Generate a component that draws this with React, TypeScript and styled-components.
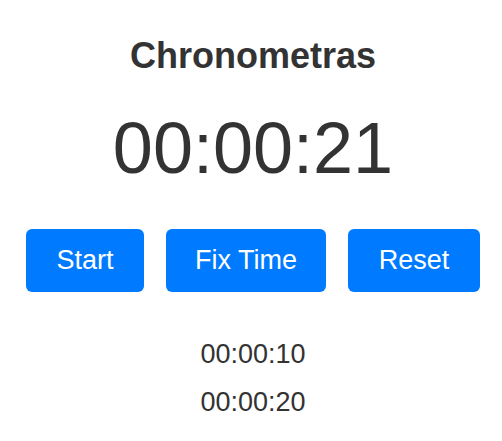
import React from 'react';
import styled, { createGlobalStyle } from 'styled-components';

const GlobalStyle = createGlobalStyle`
  html, body {
    margin: 0;
    padding: 0;
    background: #ffffff;
  }
  body {
    font-family: "Liberation Sans", Arial, sans-serif;
    color: #333333;
  }
`;

const laps = ['00:00:10', '00:00:20'];

const actions = [
  { label: 'Start', width: 118 },
  { label: 'Fix Time', width: 160 },
  { label: 'Reset', width: 132 },
];

export default function App() {
  return (
    <React.Fragment>
      <GlobalStyle />
      <Page>
        <Title>Chronometras</Title>
        <Clock>00:00:21</Clock>
        <Controls>
          {actions.map(action => (
            <ActionButton key={action.label} $width={action.width}>
              {action.label}
            </ActionButton>
          ))}
        </Controls>
        <LapList>
          {laps.map(lap => (
            <Lap key={lap}>{lap}</Lap>
          ))}
        </LapList>
      </Page>
    </React.Fragment>
  );
}

const Page = styled.div`
  display: flex;
  flex-direction: column;
  align-items: center;
  padding: 36px 0 0 4px;
`;

const Title = styled.h1`
  margin: 0;
  font-size: 36px;
  line-height: 40px;
  font-weight: 700;
  color: #333333;
`;

const Clock = styled.div`
  margin-top: 32px;
  font-size: 72px;
  line-height: 80px;
  color: #333333;
`;

const Controls = styled.div`
  display: flex;
  gap: 22px;
  margin-top: 41px;
`;

const ActionButton = styled.button<{ $width: number }>`
  display: flex;
  align-items: center;
  justify-content: center;
  width: ${({ $width }) => $width}px;
  height: 63px;
  padding: 0;
  border: none;
  border-radius: 6px;
  background: #007bff;
  color: #ffffff;
  font-family: "Liberation Sans", Arial, sans-serif;
  font-size: 27px;
  cursor: pointer;
`;

const LapList = styled.div`
  display: flex;
  flex-direction: column;
  align-items: center;
  margin-top: 38px;
`;

const Lap = styled.div`
  font-size: 27px;
  line-height: 48px;
  color: #333333;
`;
